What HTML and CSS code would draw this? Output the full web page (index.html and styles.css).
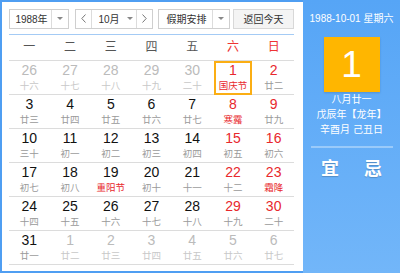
FILE: index.html
```html
<!DOCTYPE html>
<html lang="zh-CN">
<head>
<meta charset="utf-8">
<title>万年历</title>
<link rel="stylesheet" href="styles.css">
</head>
<body>
<div class="widget">
  <div class="main">
    <div class="toolbar">
      <div class="select year">
        <span class="sel-text">1988年</span>
        <span class="sel-arrow"><i class="tri"></i></span>
      </div>
      <div class="select month">
        <span class="nav"><svg width="5" height="9" viewBox="0 0 5 9"><polyline points="4.5,0.5 0.8,4.5 4.5,8.5" fill="none" stroke="#777" stroke-width="1"/></svg></span>
        <span class="sel-text mid">10月<i class="tri"></i></span>
        <span class="nav"><svg width="5" height="9" viewBox="0 0 5 9"><polyline points="0.5,0.5 4.2,4.5 0.5,8.5" fill="none" stroke="#777" stroke-width="1"/></svg></span>
      </div>
      <div class="select holiday">
        <span class="sel-text">假期安排</span>
        <span class="sel-arrow"><i class="tri"></i></span>
      </div>
      <div class="today-btn">返回今天</div>
    </div>
    <div class="grid">
      <div class="wk">一</div><div class="wk">二</div><div class="wk">三</div><div class="wk">四</div><div class="wk">五</div><div class="wk red">六</div><div class="wk red">日</div>

      <div class="day other"><b>26</b><span>十六</span></div>
      <div class="day other"><b>27</b><span>十七</span></div>
      <div class="day other"><b>28</b><span>十八</span></div>
      <div class="day other"><b>29</b><span>十九</span></div>
      <div class="day other"><b>30</b><span>二十</span></div>
      <div class="day we sel"><b>1</b><span class="fest">国庆节</span></div>
      <div class="day we"><b>2</b><span>廿二</span></div>

      <div class="day"><b>3</b><span>廿三</span></div>
      <div class="day"><b>4</b><span>廿四</span></div>
      <div class="day"><b>5</b><span>廿五</span></div>
      <div class="day"><b>6</b><span>廿六</span></div>
      <div class="day"><b>7</b><span>廿七</span></div>
      <div class="day we"><b>8</b><span class="fest">寒露</span></div>
      <div class="day we"><b>9</b><span>廿九</span></div>

      <div class="day"><b>10</b><span>三十</span></div>
      <div class="day"><b>11</b><span>初一</span></div>
      <div class="day"><b>12</b><span>初二</span></div>
      <div class="day"><b>13</b><span>初三</span></div>
      <div class="day"><b>14</b><span>初四</span></div>
      <div class="day we"><b>15</b><span>初五</span></div>
      <div class="day we"><b>16</b><span>初六</span></div>

      <div class="day"><b>17</b><span>初七</span></div>
      <div class="day"><b>18</b><span>初八</span></div>
      <div class="day"><b>19</b><span class="fest">重阳节</span></div>
      <div class="day"><b>20</b><span>初十</span></div>
      <div class="day"><b>21</b><span>十一</span></div>
      <div class="day we"><b>22</b><span>十二</span></div>
      <div class="day we"><b>23</b><span class="fest">霜降</span></div>

      <div class="day"><b>24</b><span>十四</span></div>
      <div class="day"><b>25</b><span>十五</span></div>
      <div class="day"><b>26</b><span>十六</span></div>
      <div class="day"><b>27</b><span>十七</span></div>
      <div class="day"><b>28</b><span>十八</span></div>
      <div class="day we"><b>29</b><span>十九</span></div>
      <div class="day we"><b>30</b><span>二十</span></div>

      <div class="day"><b>31</b><span>廿一</span></div>
      <div class="day other"><b>1</b><span>廿二</span></div>
      <div class="day other"><b>2</b><span>廿三</span></div>
      <div class="day other"><b>3</b><span>廿四</span></div>
      <div class="day other"><b>4</b><span>廿五</span></div>
      <div class="day other"><b>5</b><span>廿六</span></div>
      <div class="day other"><b>6</b><span>廿七</span></div>
    </div>
  </div>
  <div class="side">
    <div class="side-date">1988-10-01 星期六</div>
    <div class="big-day">1</div>
    <div class="lunar">八月廿一</div>
    <div class="lunar">戊辰年【龙年】</div>
    <div class="lunar">辛酉月 己丑日</div>
    <div class="side-line"></div>
    <div class="yiji"><span>宜</span><span>忌</span></div>
  </div>
</div>
</body>
</html>
```

FILE: styles.css
```css
* { box-sizing: border-box; margin: 0; padding: 0; }
html, body { width: 400px; height: 273px; overflow: hidden; background: #fff; }
body { font-family: "Liberation Sans", "Noto Sans CJK SC", sans-serif; color: #333; }

.widget { display: flex; width: 400px; height: 273px; }

.main {
  width: 303px;
  height: 273px;
  border: 2px solid #4f9ef2;
  border-right: none;
  padding: 0 9px 0 7px;
  background: #fff;
}

.toolbar {
  display: flex;
  align-items: center;
  height: 33px;
  padding: 7px 0 6px;
  border-bottom: 1px solid #a4cbf5;
  font-size: 10px;
  color: #333;
}

.select {
  display: flex;
  height: 20px;
  border: 1px solid #cfcfcf;
  background: #fff;
}
.sel-text { display: flex; align-items: center; justify-content: center; }
.sel-arrow {
  display: flex; align-items: center; justify-content: center;
  border-left: 1px solid #dcdcdc;
}
.tri {
  display: inline-block;
  width: 0; height: 0;
  border-left: 3px solid transparent;
  border-right: 3px solid transparent;
  border-top: 3px solid #888;
}
.year { width: 60px; }
.year .sel-text { width: 41px; padding-left: 2px; }
.year .sel-arrow { width: 17px; }

.month { width: 78px; margin-left: 6px; }
.month .nav { display: flex; align-items: center; justify-content: center; width: 15px; }
.month .mid {
  width: 47px;
  border-left: 1px solid #dcdcdc;
  border-right: 1px solid #dcdcdc;
  gap: 7px;
  padding-left: 3px;
}

.holiday { width: 72px; margin-left: 5px; }
.holiday .sel-text { width: 53px; padding-left: 2px; }
.holiday .sel-arrow { width: 17px; }

.today-btn {
  margin-left: auto;
  width: 61px;
  height: 20px;
  display: flex; align-items: center; justify-content: center;
  background: #f4f4f4;
  border: 1px solid #d8d8d8;
  color: #333;
}

.grid {
  display: grid;
  grid-template-columns: repeat(7, 1fr);
  width: 285px;
}
.wk {
  height: 26px;
  line-height: 25px;
  text-align: center;
  font-size: 12px;
  color: #555;
  border-bottom: 1px solid #dcdcdc;
}
.red { color: #e33; }

.day {
  position: relative;
  height: 34px;
  padding-top: 1px;
  border-bottom: 1px solid #dcdcdc;
  display: flex;
  flex-direction: column;
  align-items: center;
}
.day b {
  font-weight: normal;
  font-size: 14px;
  line-height: 17px;
  color: #111;
}
.day span {
  font-size: 9.5px;
  line-height: 12px;
  color: #9a9a9a;
  font-family: "Noto Sans CJK SC", sans-serif;
}
.day.we b { color: #e8282d; }
.day span.fest { color: #e8282d; }
.day.other b { color: #bbb; }
.day.other span { color: #c8c8c8; }
.day.sel::after {
  content: "";
  position: absolute;
  left: 1px; right: 1px; top: 0; bottom: -1px;
  border: 2px solid #fbae14;
}

.side {
  flex: 1;
  height: 273px;
  background: linear-gradient(#56a5f6, #72b6f9);
  display: flex;
  flex-direction: column;
  align-items: center;
  color: #fff;
  padding-top: 12px;
}
.side-date {
  font-size: 10px;
  line-height: 14px;
  white-space: nowrap;
}
.big-day {
  margin-top: 11px;
  width: 56px;
  height: 55px;
  background: #ffb600;
  box-shadow: 0 1px 2px rgba(0,0,0,0.15);
  font-size: 37px;
  line-height: 55px;
  text-align: center;
  color: #fff;
}
.lunar {
  font-size: 10px;
  line-height: 15px;
  white-space: nowrap;
}
.lunar:first-of-type { margin-top: 3px; }
.side-line {
  margin-top: 9px;
  width: 82px;
  height: 2px;
  background: rgba(255,255,255,0.35);
}
.yiji {
  margin-top: 8px;
  display: flex;
  gap: 25px;
  font-family: "Noto Sans CJK SC", sans-serif;
  font-size: 18px;
  line-height: 22px;
  font-weight: bold;
  text-shadow: 0 1px 1px rgba(0,0,0,0.2);
}
```
